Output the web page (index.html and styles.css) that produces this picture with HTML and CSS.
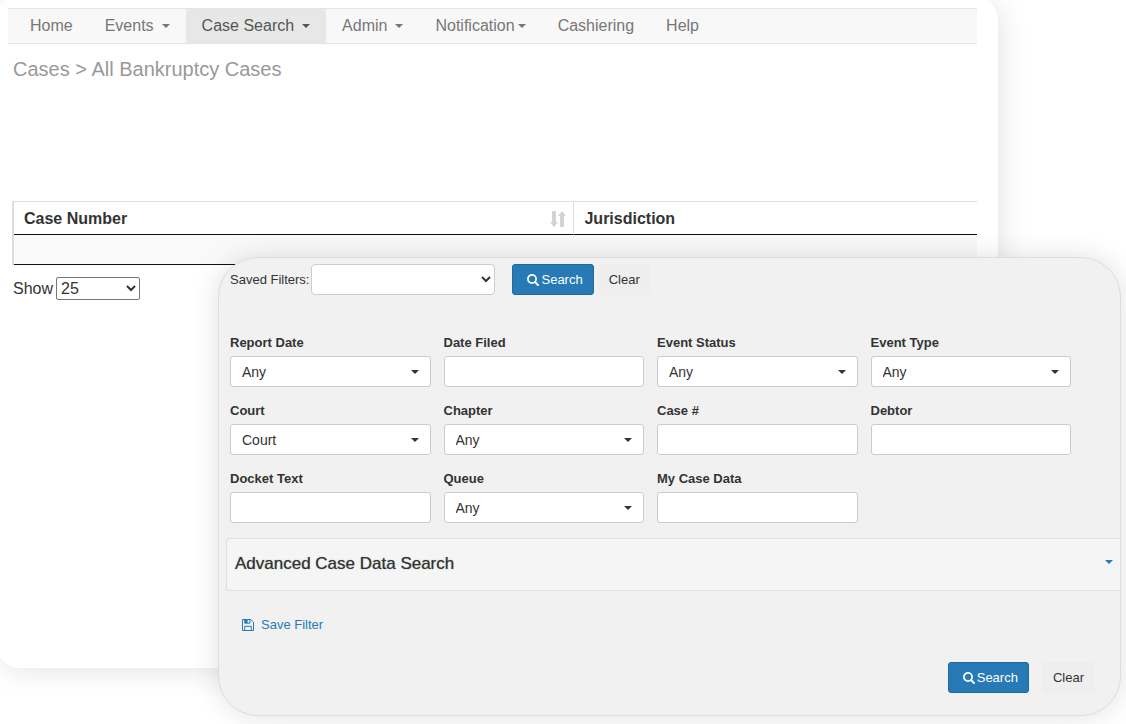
FILE: index.html
```html
<!DOCTYPE html>
<html lang="en">
<head>
<meta charset="utf-8">
<meta name="viewport" content="width=device-width, initial-scale=1">
<title>All Bankruptcy Cases</title>
<link rel="stylesheet" href="styles.css">
</head>
<body>
<svg class="sprite" aria-hidden="true">
  <symbol id="icon-search" viewBox="0 0 12 12">
    <circle cx="5" cy="5" r="4.1" fill="none" stroke="currentColor" stroke-width="1.7"/>
    <path d="M8.1 8.1 11 11" stroke="currentColor" stroke-width="2" stroke-linecap="round"/>
  </symbol>
  <symbol id="icon-save" viewBox="0 0 12 12">
    <path d="M.5.5h8.3l2.7 2.7v8.3H.5z" fill="none" stroke="currentColor"/>
    <path d="M2.7.5v3.7h5.2V.5" fill="none" stroke="currentColor"/>
    <path d="M3 1h2.6v3H3z" fill="currentColor"/>
    <path d="M2.7 11.5V7.3h6.6v4.2" fill="none" stroke="currentColor"/>
  </symbol>
</svg>
<div class="stage">
  <main class="cases">
    <nav class="navbar">
      <a class="nav-link" href="#">Home</a>
      <a class="nav-link" href="#">Events<span class="caret"></span></a>
      <a class="nav-link active" href="#" aria-current="page">Case Search<span class="caret"></span></a>
      <a class="nav-link" href="#">Admin<span class="caret"></span></a>
      <a class="nav-link tight" href="#">Notification<span class="caret"></span></a>
      <a class="nav-link" href="#">Cashiering</a>
      <a class="nav-link" href="#">Help</a>
    </nav>
    <h1 class="page-title">Cases &gt; All Bankruptcy Cases</h1>
    <table class="case-table">
      <thead>
        <tr>
          <th class="col-number" scope="col">
            <div class="th-inner">Case Number
              <svg class="sort-icon" viewBox="0 0 16 16" aria-hidden="true"><path d="M2 0h4v11h2l-4 5-4-5h2zM10 16h4V5h2l-4-5-4 5h2z" fill="currentColor"/></svg>
            </div>
          </th>
          <th scope="col">Jurisdiction</th>
        </tr>
      </thead>
      <tbody><tr><td colspan="2"></td></tr></tbody>
    </table>
    <div class="page-size">
      <label for="page-size">Show</label>
      <select id="page-size" class="size-select"><option>25</option></select>
    </div>
  </main>

  <form class="panel">
    <div class="saved-row">
      <label for="saved">Saved Filters:</label>
      <select id="saved" class="saved-select"><option></option></select>
      <button class="btn btn-primary" type="button"><svg class="icon" aria-hidden="true"><use href="#icon-search"/></svg>Search</button>
      <button class="btn btn-clear" type="reset">Clear</button>
    </div>
    <div class="fields">
      <div class="field"><label for="report-date">Report Date</label><div class="pick"><select id="report-date"><option>Any</option></select></div></div>
      <div class="field"><label for="date-filed">Date Filed</label><input id="date-filed" type="text"></div>
      <div class="field"><label for="event-status">Event Status</label><div class="pick"><select id="event-status"><option>Any</option></select></div></div>
      <div class="field"><label for="event-type">Event Type</label><div class="pick"><select id="event-type"><option>Any</option></select></div></div>
      <div class="field"><label for="court">Court</label><div class="pick"><select id="court"><option>Court</option></select></div></div>
      <div class="field"><label for="chapter">Chapter</label><div class="pick"><select id="chapter"><option>Any</option></select></div></div>
      <div class="field"><label for="case-no">Case #</label><input id="case-no" type="text"></div>
      <div class="field"><label for="debtor">Debtor</label><input id="debtor" type="text"></div>
      <div class="field"><label for="docket">Docket Text</label><input id="docket" type="text"></div>
      <div class="field"><label for="queue">Queue</label><div class="pick"><select id="queue"><option>Any</option></select></div></div>
      <div class="field"><label for="my-data">My Case Data</label><input id="my-data" type="text"></div>
    </div>
    <button class="advanced" type="button" aria-expanded="false">Advanced Case Data Search<span class="caret"></span></button>
    <a class="save-link" href="#"><svg class="icon" aria-hidden="true"><use href="#icon-save"/></svg>Save Filter</a>
    <div class="actions">
      <button class="btn btn-primary" type="button"><svg class="icon" aria-hidden="true"><use href="#icon-search"/></svg>Search</button>
      <button class="btn btn-clear" type="reset">Clear</button>
    </div>
  </form>
</div>
</body>
</html>
```

FILE: styles.css
```css
* { box-sizing: border-box; }

body {
  margin: 0;
  background: #fff;
  color: #333;
  font-family: "Liberation Sans", Arial, sans-serif;
  font-size: 16px;
}

.sprite { display: none; }

/* The search panel shares one grid cell with the case list and lies over it. */
.stage { display: grid; }
.cases, .panel { grid-area: 1 / 1; min-width: 0; }

.cases {
  margin: -4px 128px 56px -4px;
  padding: 12px 21px 0 12px;
  background: #fff;
  border-radius: 24px;
  box-shadow: 4px 4px 28px rgba(0, 0, 0, .1);
}

.navbar {
  display: flex;
  padding-left: 6px;
  background: #f8f8f8;
  border: solid #e4e4e4;
  border-width: 1px 0;
}
.nav-link {
  display: flex;
  align-items: center;
  gap: 8px;
  padding: 0 16px;
  color: #777;
  line-height: 34px;
  text-decoration: none;
}
.nav-link.active { background: #e7e7e7; color: #555; }
.nav-link.tight { gap: 3px; }

.caret {
  border: 4px solid transparent;
  border-top-color: currentColor;
  border-bottom: 0;
}

.page-title {
  margin: 13px 0 0 5px;
  color: #999;
  font-size: 20px;
  font-weight: 400;
  line-height: 24px;
}

.case-table {
  width: calc(100% - 4px);
  margin: 120px 0 0 4px;
  border-collapse: separate;
  border-spacing: 0;
  border-left: 2px solid #ddd;
}
.case-table th {
  height: 34px;
  padding: 2px 0 0 10px;
  border-top: 1px solid #ddd;
  border-bottom: 1px solid #111;
  text-align: left;
}
.case-table .col-number {
  width: 58.2%;
  padding-right: 7px;
  border-right: 1px solid #ddd;
}
.case-table td {
  height: 30px;
  background: #f9f9f9;
  border-bottom: 1px solid #111;
}
.th-inner { display: flex; align-items: center; justify-content: space-between; }
.sort-icon { width: 16px; height: 16px; color: #d3d3d3; }

.page-size {
  display: flex;
  align-items: center;
  gap: 3px;
  margin: 12px 0 0 5px;
}
.size-select {
  width: 84px;
  height: 23px;
  border: 1px solid #767676;
  border-radius: 2px;
  background: #fff;
  color: #333;
  font: inherit;
}

.panel {
  margin: 257px 5px 8px 218px;
  padding: 6px 0 22px;
  background: #f1f1f1;
  border: 1px solid #ddd;
  border-radius: 40px;
  box-shadow: 0 0 28px rgba(0, 0, 0, .12);
  font-size: 13px;
}

.btn {
  display: flex;
  align-items: center;
  justify-content: center;
  gap: 2px;
  height: 31px;
  padding: 0 10px;
  border: 1px solid transparent;
  border-radius: 3px;
  font: inherit;
}
.btn-primary { padding-left: 14px; background: #277ab5; border-color: #20699c; color: #fff; }
.btn-clear { background: #eee; color: #333; }
.icon { width: 12px; height: 12px; }

.saved-row {
  display: flex;
  align-items: center;
  margin: 0 50px 0 11px;
  padding-bottom: 18px;
  border-bottom: 1px solid #eee;
}
.saved-select {
  width: 184px;
  height: 31px;
  margin: 0 17px 0 2px;
  border: 1px solid #ccc;
  border-radius: 4px;
  background: #fff;
  color: #333;
}
.saved-row .btn-clear { margin-left: 4px; }

.fields {
  display: grid;
  grid-template-columns: repeat(4, minmax(0, 1fr));
  gap: 15px 13px;
  margin: 20px 49px 15px 11px;
}
.field { display: grid; gap: 4px; }
.field label { font-weight: 700; line-height: 18px; }
.field input, .field select {
  width: 100%;
  height: 31px;
  padding: 0 11px;
  border: 1px solid #ccc;
  border-radius: 3px;
  background: #fff;
  color: #333;
  font: inherit;
  font-size: 14px;
}
.field select { appearance: none; }
.pick { position: relative; }
.pick::after {
  content: "";
  position: absolute;
  top: 14px;
  right: 12px;
  border: 4px solid transparent;
  border-top-color: #333;
  border-bottom: 0;
  pointer-events: none;
}

.advanced {
  display: flex;
  align-items: center;
  justify-content: space-between;
  width: calc(100% - 7px);
  height: 53px;
  margin-left: 7px;
  padding: 0 7px 2px 8px;
  border: 1px solid #e0e0e0;
  border-right: 0;
  border-radius: 3px 0 0 3px;
  background: #f5f5f5;
  color: #333;
  font: inherit;
  font-size: 17px;
  text-shadow: 0 0 1px #777;
}
.advanced .caret { margin-bottom: 4px; color: #277ab5; }

.save-link {
  display: flex;
  align-items: center;
  gap: 7px;
  width: max-content;
  margin: 25px 0 0 23px;
  color: #277ab5;
  line-height: 18px;
  text-decoration: none;
}

.actions {
  display: flex;
  justify-content: flex-end;
  gap: 13px;
  margin: 28px 25px 0 0;
}
```
